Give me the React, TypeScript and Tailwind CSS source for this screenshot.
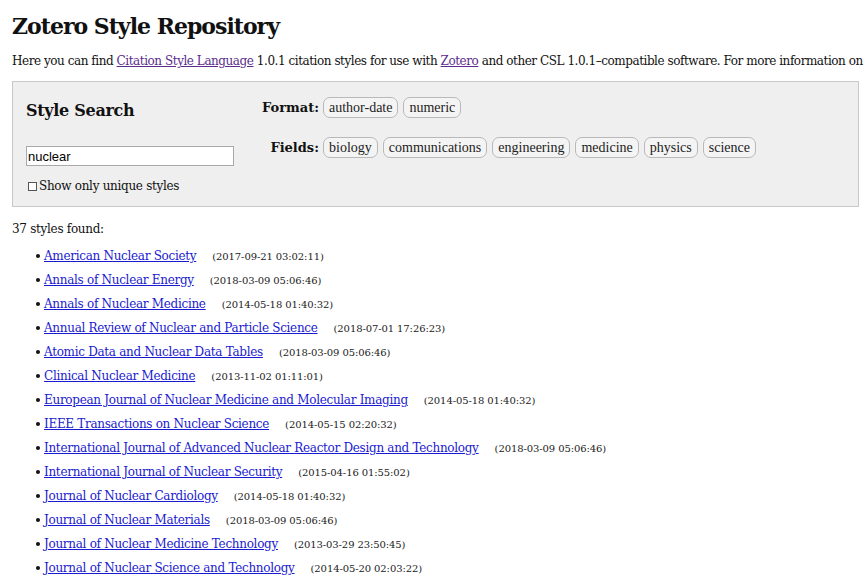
const STYLES = [
  { name: "American Nuclear Society", date: "2017-09-21 03:02:11" },
  { name: "Annals of Nuclear Energy", date: "2018-03-09 05:06:46" },
  { name: "Annals of Nuclear Medicine", date: "2014-05-18 01:40:32" },
  { name: "Annual Review of Nuclear and Particle Science", date: "2018-07-01 17:26:23" },
  { name: "Atomic Data and Nuclear Data Tables", date: "2018-03-09 05:06:46" },
  { name: "Clinical Nuclear Medicine", date: "2013-11-02 01:11:01" },
  { name: "European Journal of Nuclear Medicine and Molecular Imaging", date: "2014-05-18 01:40:32" },
  { name: "IEEE Transactions on Nuclear Science", date: "2014-05-15 02:20:32" },
  { name: "International Journal of Advanced Nuclear Reactor Design and Technology", date: "2018-03-09 05:06:46" },
  { name: "International Journal of Nuclear Security", date: "2015-04-16 01:55:02" },
  { name: "Journal of Nuclear Cardiology", date: "2014-05-18 01:40:32" },
  { name: "Journal of Nuclear Materials", date: "2018-03-09 05:06:46" },
  { name: "Journal of Nuclear Medicine Technology", date: "2013-03-29 23:50:45" },
  { name: "Journal of Nuclear Science and Technology", date: "2014-05-20 02:03:22" },
];

const FORMATS = ["author-date", "numeric"];
const FIELDS = ["biology", "communications", "engineering", "medicine", "physics", "science"];

function Pill({ label }: { label: string }) {
  return (
    <span className="rounded-[7px] border border-[#b9b9b9] bg-[#f4f4f4] px-[5px] py-[1px] font-['Liberation_Serif',serif] text-[14px] leading-[17px] text-[#222]">
      {label}
    </span>
  );
}

export default function App() {
  return (
    <div className="h-[577px] w-[866px] overflow-hidden bg-white font-['DejaVu_Serif',serif] text-[#111]">
      <div className="px-[12px] pt-[12px]">
        <h1 className="text-[22px] font-bold leading-[28px] tracking-[-1px]">Zotero Style Repository</h1>
        <p className="mt-[13px] whitespace-nowrap text-[12px] leading-[16px] tracking-[-0.45px]">
          Here you can find{" "}
          <a className="text-[#5b2c8c] underline">Citation Style Language</a> 1.0.1 citation styles for use with{" "}
          <a className="text-[#5b2c8c] underline">Zotero</a> and other CSL 1.0.1–compatible software. For more information on
        </p>

        <div className="mt-[12px] flex h-[126px] w-[847px] border border-[#c8c8c8] bg-[#efefef]">
          <div className="flex w-[236px] flex-col pl-[13px] pt-[18px]">
            <h2 className="text-[16px] font-bold leading-[22px] tracking-[-0.3px]">Style Search</h2>
            <input
              defaultValue="nuclear"
              className="mt-[24px] h-[20px] w-[208px] border border-[#a9a9a9] bg-white px-[1px] font-['Liberation_Sans',sans-serif] text-[13px] text-black outline-none"
            />
            <label className="ml-[2px] mt-[12px] flex items-center gap-[2px] text-[12px] leading-[16px] tracking-[-0.3px]">
              <span className="inline-block h-[9px] w-[9px] border border-[#555] bg-white" />
              Show only unique styles
            </label>
          </div>
          <div className="flex flex-col gap-[19px] pt-[15px]">
            <div className="flex items-center gap-[5px]">
              <span className="mr-[-1px] w-[70px] text-right text-[13px] font-bold">Format:</span>
              {FORMATS.map((f) => (
                <Pill key={f} label={f} />
              ))}
            </div>
            <div className="flex items-center gap-[5px]">
              <span className="mr-[-1px] w-[70px] text-right text-[13px] font-bold">Fields:</span>
              {FIELDS.map((f) => (
                <Pill key={f} label={f} />
              ))}
            </div>
          </div>
        </div>

        <p className="mt-[14px] text-[12px] leading-[16px] tracking-[-0.3px]">37 styles found:</p>
        <ul className="mt-[7px] flex flex-col">
          {STYLES.map((s) => (
            <li key={s.name} className="flex h-[24px] items-center whitespace-nowrap pl-[24px] text-[12px]">
              <span className="mr-[4px] inline-block h-[4px] w-[4px] rounded-full bg-[#111]" />
              <a className="tracking-[-0.3px] text-[#1a1ad0] underline">{s.name}</a>
              <span className="ml-[16px] text-[10px] tracking-[-0.1px] text-[#222]">({s.date})</span>
            </li>
          ))}
        </ul>
      </div>
    </div>
  );
}
